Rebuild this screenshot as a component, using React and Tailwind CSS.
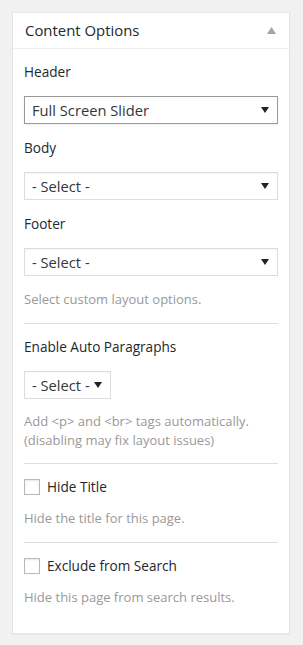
import React from "react";

const font = { fontFamily: '"Open Sans", "Noto Sans", sans-serif' };

const Arrow = () => (
  <svg width="8" height="6" viewBox="0 0 8 6" className="shrink-0">
    <path d="M0 0 L8 0 L4 6 Z" fill="#222" />
  </svg>
);

const Select = ({ value, focused, small }) => (
  <div
    className={`flex items-center justify-between h-[28px] bg-white pl-[7px] pr-[8px] text-[14.7px] text-[#32373c] ${
      small ? "w-[87px]" : "w-[254px]"
    } ${focused ? "border border-[#999] shadow-[0_1px_2px_rgba(0,0,0,0.07)]" : "border border-[#ddd] shadow-[inset_0_1px_2px_rgba(0,0,0,0.04)]"}`}
  >
    <span>{value}</span>
    <Arrow />
  </div>
);

const Label = ({ children }) => (
  <div className="h-[18px] leading-[18px] text-[13.6px] text-[#23282d]">{children}</div>
);

const Desc = ({ children }) => (
  <div className="text-[13px] leading-[19px] text-[#999]">{children}</div>
);

const Check = ({ label }) => (
  <div className="flex items-center gap-[7px] h-[18px]">
    <div className="w-[16px] h-[16px] border border-[#b4b9be] bg-white shadow-[inset_0_1px_2px_rgba(0,0,0,0.1)]"></div>
    <span className="text-[13.6px] text-[#23282d]">{label}</span>
  </div>
);

export default function App() {
  return (
    <div className="bg-[#f1f1f1] h-[645px] w-[303px] pt-[12px] pl-[12px]" style={font}>
      <div className="w-[278px] bg-white border border-[#e5e5e5] shadow-[0_1px_1px_rgba(0,0,0,0.04)]">
        <div className="h-[36px] flex items-center justify-between pl-[12px] pr-[13px] border-b border-[#eee]">
          <span className="text-[14.9px] text-[#23282d]">Content Options</span>
          <svg width="9" height="7" viewBox="0 0 9 7">
            <path d="M0 7 L4.5 0 L9 7 Z" fill="#a0a5aa" />
          </svg>
        </div>
        <div className="px-[11px]">
          <div className="pt-[14px] pb-[14px] border-b border-[#ddd] flex flex-col">
            <Label>Header</Label>
            <div className="mt-[15px]"><Select value="Full Screen Slider" focused /></div>
            <div className="mt-[15px]"><Label>Body</Label></div>
            <div className="mt-[15px]"><Select value="- Select -" /></div>
            <div className="mt-[15px]"><Label>Footer</Label></div>
            <div className="mt-[15px]"><Select value="- Select -" /></div>
            <div className="mt-[14px]"><Desc>Select custom layout options.</Desc></div>
          </div>
          <div className="pt-[14px] pb-[13px] border-b border-[#ddd] flex flex-col">
            <Label>Enable Auto Paragraphs</Label>
            <div className="mt-[15px]"><Select value="- Select -" small /></div>
            <div className="mt-[13px]">
              <Desc>Add &lt;p&gt; and &lt;br&gt; tags automatically.</Desc>
              <Desc>(disabling may fix layout issues)</Desc>
            </div>
          </div>
          <div className="pt-[14px] pb-[14px] border-b border-[#ddd] flex flex-col">
            <Check label="Hide Title" />
            <div className="mt-[13px]"><Desc>Hide the title for this page.</Desc></div>
          </div>
          <div className="pt-[14px] pb-[26px] flex flex-col">
            <Check label="Exclude from Search" />
            <div className="mt-[13px]"><Desc>Hide this page from search results.</Desc></div>
          </div>
        </div>
      </div>
    </div>
  );
}
